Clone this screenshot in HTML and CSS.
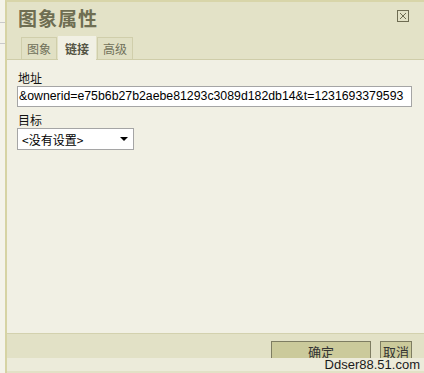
FILE: index.html
```html
<!DOCTYPE html>
<html lang="zh">
<head>
<meta charset="utf-8">
<title>图象属性</title>
<link rel="stylesheet" href="styles.css">
</head>
<body>
<div class="page">
  <div class="backdrop"><span></span><span></span></div>
  <div class="dialog">
    <div class="header">
      <div class="title-row">
        <h1 class="title">图象属性</h1>
        <span class="close" aria-label="关闭">
          <svg width="12" height="12" viewBox="0 0 12 12"><rect x="0.5" y="0.5" width="11" height="11" fill="none" stroke="#6e6c52"/><path d="M3 3L9 9M9 3L3 9" stroke="#6e6c52" stroke-width="1"/></svg>
        </span>
      </div>
      <div class="tabs">
        <span class="tab">图象</span>
        <span class="tab active">链接</span>
        <span class="tab">高级</span>
      </div>
    </div>
    <div class="content">
      <div class="field">
        <label class="label">地址</label>
        <div class="input">&amp;ownerid=e75b6b27b2aebe81293c3089d182db14&amp;t=1231693379593</div>
      </div>
      <div class="field">
        <label class="label">目标</label>
        <div class="select"><span>&lt;没有设置&gt;</span><svg width="8" height="4" viewBox="0 0 8 4"><path d="M0 0H8L4 4Z" fill="#000"/></svg></div>
      </div>
    </div>
    <div class="footer">
      <button class="btn ok">确定</button>
      <button class="btn cancel">取消</button>
    </div>
    <div class="bottom"></div>
  </div>
  <div class="watermark">Ddser88.51.com</div>
</div>
</body>
</html>
```
FILE: styles.css
```css
html, body {
  margin: 0;
  padding: 0;
}
body {
  width: 424px;
  height: 373px;
  overflow: hidden;
  background: #f7f6ee;
  font-family: "Liberation Sans", "Noto Sans CJK SC", sans-serif;
}
.page {
  position: relative;
  width: 424px;
  height: 373px;
  display: flex;
}
.backdrop {
  width: 5px;
  flex: none;
  background: #f4f3ea;
  position: relative;
}
.backdrop span {
  position: absolute;
  left: 0;
  width: 5px;
  height: 1px;
  background: #c9c9c9;
}
.backdrop span:first-child { top: 22px; }
.backdrop span:last-child { top: 43px; }
.dialog {
  flex: 1;
  display: flex;
  flex-direction: column;
  border-left: 2px solid #d6d3a4;
  border-top: 2px solid #d8d5a9;
  height: 371px;
}
.header {
  background: #e3e2c7;
  border-bottom: 1px solid #cfcda9;
  padding: 0 0 0 13px;
}
.title-row {
  display: flex;
  justify-content: space-between;
  align-items: flex-start;
  height: 34px;
}
.title {
  margin: 5px 0 0 -2px;
  font-family: "Noto Sans CJK SC", sans-serif;
  font-size: 19px;
  line-height: 22px;
  font-weight: 700;
  letter-spacing: 1px;
  color: #6f6e52;
}
.close {
  margin: 8px 15px 0 0;
  width: 12px;
  height: 12px;
  display: block;
}
.close svg { display: block; }
.tabs {
  display: flex;
  gap: 1px;
  height: 23px;
  align-items: flex-end;
  padding-left: 1px;
}
.tab {
  font-family: "Noto Sans CJK SC", sans-serif;
  font-size: 12px;
  line-height: 20px;
  height: 22px;
  padding: 0 5px;
  color: #70705a;
  background: #e1e0c4;
  border: 1px solid #d0ceab;
  border-bottom: none;
  box-sizing: border-box;
  display: flex;
  align-items: center;
}
.tab.active {
  background: #f1f0e4;
  font-weight: 700;
  color: #555544;
  height: 24px;
  margin-bottom: -1px;
  border-color: #f1f0e4;
  padding: 0 6px;
}
.content {
  flex: 1;
  background: #f1f0e4;
  padding: 9px 12px 0 10px;
  display: flex;
  flex-direction: column;
  gap: 4px;
}
.field {
  display: flex;
  flex-direction: column;
}
.label {
  font-family: "Noto Sans CJK SC", sans-serif;
  font-size: 12px;
  line-height: 17px;
  color: #111;
  padding-left: 1px;
}
.input {
  height: 21px;
  box-sizing: border-box;
  border: 1px solid #a5a5a5;
  background: #fff;
  font-size: 12.3px;
  line-height: 19px;
  padding: 0 1px;
  white-space: nowrap;
  overflow: hidden;
  color: #000;
}
.select {
  width: 117px;
  height: 22px;
  box-sizing: border-box;
  border: 1px solid #a5a5a5;
  background: #fff;
  display: flex;
  align-items: center;
  justify-content: space-between;
  padding: 0 5px 0 4px;
  font-family: "Noto Sans CJK SC", sans-serif;
  font-size: 12px;
  color: #000;
}
.select svg { display: block; }
.footer {
  background: #e2e1c6;
  border-top: 1px solid #d3d1ae;
  height: 25px;
  box-sizing: border-box;
  display: flex;
  justify-content: flex-end;
  align-items: flex-start;
  gap: 9px;
  padding: 7px 12px 0 0;
  flex: none;
}
.btn {
  height: 22px;
  box-sizing: border-box;
  border: 1px solid #7e7d62;
  background: #cbca9b;
  font-family: "Noto Sans CJK SC", sans-serif;
  font-size: 13px;
  color: #333;
  padding: 0;
  margin: 0;
  line-height: 20px;
  flex: none;
}
.btn.ok { width: 100px; }
.btn.cancel { width: 32px; }
.bottom {
  height: 13px;
  flex: none;
  background: #ecebda;
  border-bottom: 2px solid #e2e1c6;
}
.watermark {
  position: absolute;
  right: 4px;
  bottom: 0;
  font-size: 13px;
  line-height: 16px;
  color: #1a1a1a;
}
```
